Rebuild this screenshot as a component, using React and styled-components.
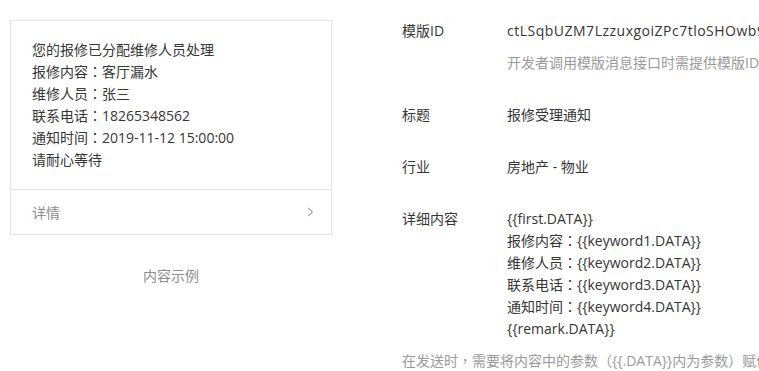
import React from "react";
import styled, { createGlobalStyle } from "styled-components";

const Global = createGlobalStyle`
  html, body {
    margin: 0;
    padding: 0;
    background: #ffffff;
    overflow: hidden;
  }
  body {
    font-family: "Open Sans", "Noto Sans CJK SC", sans-serif;
    font-size: 14px;
    color: #353535;
  }
`;

const Page = styled.div`
  display: flex;
  align-items: flex-start;
  gap: 70px;
  padding: 20px 0 0 10px;
  width: 1200px;
`;

const Preview = styled.div`
  display: flex;
  flex-direction: column;
  width: 322px;
  flex-shrink: 0;
`;

const Card = styled.div`
  border: 1px solid #e4e4e4;
  background: #fff;
`;

const CardBody = styled.div`
  padding: 18px 21px;
  border-bottom: 1px solid #e4e4e4;
`;

const Line = styled.div`
  height: 22px;
  line-height: 22px;
  white-space: nowrap;
`;

const CardFooter = styled.div`
  display: flex;
  align-items: center;
  justify-content: space-between;
  height: 44px;
  padding: 0 17px 0 21px;
  color: #8d8d8d;
`;

const Caption = styled.div`
  margin-top: 30px;
  text-align: center;
  line-height: 22px;
  color: #8d8d8d;
`;

const Details = styled.div`
  display: flex;
  flex-direction: column;
  flex: 1;
`;

const Row = styled.div`
  display: grid;
  grid-template-columns: 105px 1fr;
  margin-bottom: ${(p) => p.$gap}px;
`;

const Label = styled.div`
  line-height: 22px;
  white-space: nowrap;
`;

const Value = styled.div`
  display: flex;
  flex-direction: column;
  line-height: 22px;
  white-space: nowrap;
`;

const ValueLine = styled.span`
  display: block;
  height: 22px;
`;

const TemplateId = styled.span`
  letter-spacing: 0.5px;
`;

const Hint = styled.div`
  margin-top: 10px;
  line-height: 22px;
  color: #9a9a9a;
  white-space: nowrap;
`;

const Note = styled.div`
  height: 22px;
  line-height: 22px;
  color: #9a9a9a;
  white-space: nowrap;
`;

const Punct = styled.span`
  font-family: "Noto Sans CJK TC", sans-serif;
  line-height: 1;
`;

const PUNCT = /([：，（）])/;

const Txt = ({ children }) =>
  String(children)
    .split(PUNCT)
    .map((part, i) =>
      part.length === 1 && PUNCT.test(part) ? (
        <Punct key={i}>{part}</Punct>
      ) : (
        <React.Fragment key={i}>{part}</React.Fragment>
      )
    );

const Chevron = () => (
  <svg width="7" height="10" viewBox="0 0 7 10" fill="none">
    <path d="M1.2 1 L5.4 5 L1.2 9" stroke="#a6a6a6" strokeWidth="1.1" />
  </svg>
);

const previewLines = [
  "您的报修已分配维修人员处理",
  "报修内容：客厅漏水",
  "维修人员：张三",
  "联系电话：18265348562",
  "通知时间：2019-11-12 15:00:00",
  "请耐心等待",
];

const contentLines = [
  "{{first.DATA}}",
  "报修内容：{{keyword1.DATA}}",
  "维修人员：{{keyword2.DATA}}",
  "联系电话：{{keyword3.DATA}}",
  "通知时间：{{keyword4.DATA}}",
  "{{remark.DATA}}",
];

export default function App() {
  return (
    <>
      <Global />
      <Page>
        <Preview>
          <Card>
            <CardBody>
              {previewLines.map((l) => (
                <Line key={l}>
                  <Txt>{l}</Txt>
                </Line>
              ))}
            </CardBody>
            <CardFooter>
              <span>详情</span>
              <Chevron />
            </CardFooter>
          </Card>
          <Caption>内容示例</Caption>
        </Preview>
        <Details>
          <Row $gap={30}>
            <Label>模版ID</Label>
            <Value>
              <TemplateId>ctLSqbUZM7LzzuxgoiZPc7tloSHOwb9Kx2mQ</TemplateId>
              <Hint>开发者调用模版消息接口时需提供模版ID</Hint>
            </Value>
          </Row>
          <Row $gap={30}>
            <Label>标题</Label>
            <Value>报修受理通知</Value>
          </Row>
          <Row $gap={30}>
            <Label>行业</Label>
            <Value>房地产 - 物业</Value>
          </Row>
          <Row $gap={10}>
            <Label>详细内容</Label>
            <Value>
              {contentLines.map((l) => (
                <ValueLine key={l}>
                  <Txt>{l}</Txt>
                </ValueLine>
              ))}
            </Value>
          </Row>
          <Note>
            <Txt>{"在发送时，需要将内容中的参数（{{.DATA}}内为参数）赋值替换为需要的信息"}</Txt>
          </Note>
        </Details>
      </Page>
    </>
  );
}
